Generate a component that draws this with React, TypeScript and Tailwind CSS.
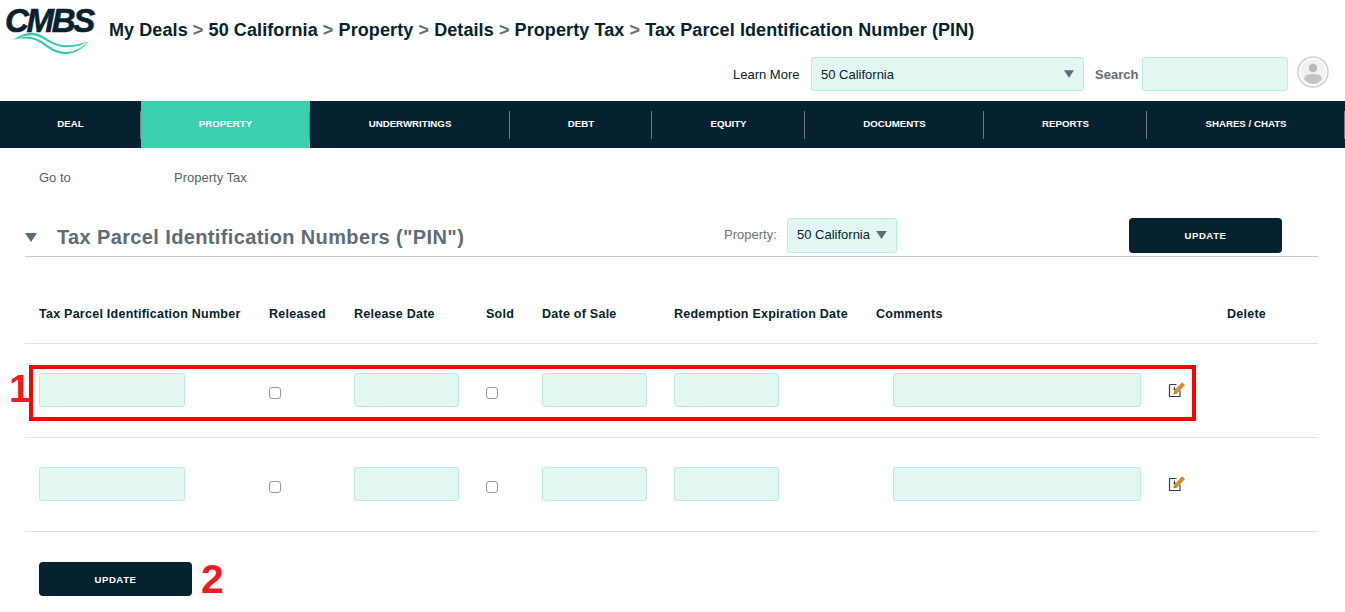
import React from 'react';

const font = { fontFamily: '"Liberation Sans", Arial, sans-serif' };

const navItems = [
  { label: 'DEAL', width: 'w-[141px]' },
  { label: 'PROPERTY', width: 'w-[169px]', active: true, divider: true },
  { label: 'UNDERWRITINGS', width: 'w-[200px]', divider: true },
  { label: 'DEBT', width: 'w-[142px]', divider: true },
  { label: 'EQUITY', width: 'w-[153px]', divider: true },
  { label: 'DOCUMENTS', width: 'w-[179px]', divider: true },
  { label: 'REPORTS', width: 'w-[163px]', divider: true },
  { label: 'SHARES / CHATS', width: 'w-[198px]', divider: true, last: true },
];

const crumbs = ['My Deals', '50 California', 'Property', 'Details', 'Property Tax', 'Tax Parcel Identification Number (PIN)'];

const headers = [
  'Tax Parcel Identification Number',
  'Released',
  'Release Date',
  'Sold',
  'Date of Sale',
  'Redemption Expiration Date',
  'Comments',
  'Delete',
];

function Logo() {
  return (
    <div className="relative w-[92px] h-[50px] shrink-0">
      <span className="absolute left-0 top-[-7px] text-[33px] leading-[38px] font-bold italic text-[#062231] tracking-[-2.3px] [-webkit-text-stroke:0.6px_#062231]">
        CMBS
      </span>
      <svg className="absolute left-0 top-0" width="92" height="50" viewBox="0 0 92 50" fill="none">
        <path d="M8 31 C16 25 24 23 30 24 C40 26 46 35 58 36 C67 37 76 35 84 32 C76 37 66 39 58 38 C46 37 38 28 30 26.5 C22 25.5 14 28 8 31Z" fill="#2fc9ab" />
        <path d="M8 31 C16 27 24 27 30 29 C40 32 46 42 60 43 C68 44 78 38 84 32 C78 40 68 46 58 45 C46 44 38 34 30 31 C22 29 14 29 8 31Z" fill="#2fc9ab" />
      </svg>
    </div>
  );
}

function Avatar() {
  return (
    <svg width="32" height="32" viewBox="0 0 32 32" fill="none">
      <circle cx="16" cy="16" r="15" fill="#fff" stroke="#cfcfcf" strokeWidth="1.5" />
      <circle cx="16" cy="16" r="12.5" fill="#f1f1f1" />
      <circle cx="16" cy="12" r="4.2" fill="#b9b9b9" />
      <path d="M7 23 C8 18.5 12 18 16 18 C20 18 24 18.5 25 23 C22.5 26.5 19.5 28 16 28 C12.5 28 9.5 26.5 7 23Z" fill="#c4c4c4" />
    </svg>
  );
}

function EditIcon() {
  return (
    <svg width="18" height="18" viewBox="0 0 18 18" fill="none" className="shrink-0">
      <path d="M1.5 3.5 H8.5 M1.5 3.5 V15.5 H12 V9.5" stroke="#3d3d3d" strokeWidth="1.2" />
      <path d="M6.5 5 L7.5 9 L5.5 9Z" fill="#222" />
      <path d="M5.8 13 L6.5 10 L14.2 1.8 L16.5 4 L8.8 12.2Z" fill="#e08e22" stroke="#a5600f" strokeWidth="0.6" />
    </svg>
  );
}

function Triangle({ className }: { className: string }) {
  return (
    <svg viewBox="0 0 12 9" className={className}>
      <path d="M0 0 H12 L6 9Z" fill="currentColor" />
    </svg>
  );
}

function TextBox({ width }: { width: string }) {
  return <input type="text" className={`${width} h-[34px] bg-[#e2f7f1] border border-[#b8ecdd] rounded-[3px] block`} />;
}

function Check() {
  return (
    <input
      type="checkbox"
      className="appearance-none block w-3 h-3 mt-[5px] bg-white border border-[#9a9a9a] rounded-[3px]"
    />
  );
}

function UpdateButton({ height }: { height: string }) {
  return (
    <button className={`w-[153px] ${height} pt-[2px] bg-[#062231] rounded-[4px] text-white text-[9.5px] font-bold tracking-[0.6px]`}>
      UPDATE
    </button>
  );
}

function PinRow() {
  return (
    <div className="grid grid-cols-[230px_85px_132px_56px_132px_202px_1fr] items-center h-[94px] pl-[14px] pb-[1px] border-b border-[#e3e3e3]">
      <TextBox width="w-[146px]" />
      <Check />
      <TextBox width="w-[105px]" />
      <Check />
      <TextBox width="w-[105px]" />
      <TextBox width="w-[105px]" />
      <div className="flex items-center pl-[17px] gap-[27px]">
        <TextBox width="w-[248px]" />
        <EditIcon />
      </div>
    </div>
  );
}

export default function App() {
  return (
    <div style={font} className="relative w-[1345px] h-[612px] bg-white overflow-hidden text-[#062231]">
      <header className="h-[101px] pl-[5px] pr-4 pt-[9px]">
        <div className="flex">
          <Logo />
          <h1 className="ml-3 mt-[9px] text-[18px] leading-6 font-bold whitespace-nowrap tracking-[0.09px]">
            {crumbs.map((crumb, i) => (
              <span key={crumb}>
                {i > 0 && <span className="text-[#5f6b76]"> &gt; </span>}
                {crumb}
              </span>
            ))}
          </h1>
        </div>
        <div className="flex items-center mt-[-2px] h-[34px] pl-[728px]">
          <span className="text-[13px] w-[78px] pt-[1px]">Learn More</span>
          <div className="w-[273px] h-[34px] px-[9px] flex items-center justify-between bg-[#e2f7f1] border border-[#b8ecdd] rounded-[3px] text-[13px]">
            <span className="pt-[1px]">50 California</span>
            <Triangle className="w-[10px] h-2 text-[#5f6b76]" />
          </div>
          <span className="ml-[11px] w-[47px] text-[13px] font-bold text-[#5f6b76] pt-[1px]">Search</span>
          <TextBox width="w-[146px]" />
          <div className="ml-[9px] mt-[-4px]">
            <Avatar />
          </div>
        </div>
      </header>

      <nav className="flex h-[47px] bg-[#062231]">
        {navItems.map((item) => (
          <div
            key={item.label}
            className={`relative ${item.width} flex items-center justify-center text-[9.7px] font-bold text-white ${
              item.active ? 'bg-[#3ad0ae]' : ''
            }`}
          >
            {item.divider && <span className="absolute left-[-1px] top-[10px] h-[28px] w-px bg-[#6c7d87]" />}
            {item.last && <span className="absolute right-0 top-[10px] h-[28px] w-px bg-[#6c7d87]" />}
            {item.label}
          </div>
        ))}
      </nav>

      <div className="flex h-[58px] items-center pl-[39px] pt-[1px] text-[13px] text-[#555f68]">
        <span className="w-[135px]">Go to</span>
        <span>Property Tax</span>
      </div>

      <main className="pl-[25px] pr-[27px]">
        <div className="flex items-center h-[51px] pt-[12px] border-b border-[#c9c9c9]">
          <Triangle className="w-3 h-[9px] text-[#5f6b76]" />
          <h2 className="ml-5 text-[20px] font-bold text-[#5f6b76] w-[667px] tracking-[0.37px]">Tax Parcel Identification Numbers ("PIN")</h2>
          <span className="text-[13px] text-[#6a7178] w-[63px] -mt-[4px]">Property:</span>
          <div className="w-[110px] h-[35px] -mt-[4px] px-[9px] flex items-center justify-between bg-[#e2f7f1] border border-[#b8ecdd] rounded-[3px] text-[13px]">
            50 California
            <Triangle className="w-[11px] h-2 text-[#5f6b76]" />
          </div>
          <div className="ml-[232px] -mt-[4px]">
            <UpdateButton height="h-[35px]" />
          </div>
        </div>

        <div className="grid grid-cols-[230px_85px_132px_56px_132px_202px_351px_1fr] items-center h-[87px] pl-[14px] pt-[29px] border-b border-[#e3e3e3] text-[12.5px] font-bold tracking-[0.25px]">
          {headers.map((h) => (
            <span key={h} className="whitespace-nowrap">
              {h}
            </span>
          ))}
        </div>

        <PinRow />
        <PinRow />

        <div className="pl-[14px] pt-[30px] flex items-center">
          <UpdateButton height="h-[34px]" />
          <span className="ml-[9px] text-[41px] leading-[34px] font-bold text-[#ed1c24]">2</span>
        </div>
      </main>

      {/* annotation overlay */}
      <div className="absolute left-[29px] top-[365px] w-[1167px] h-[56px] border-[4px] border-[#ff0000]" />
      <span className="absolute left-[9px] top-[369px] text-[39px] leading-none font-bold text-[#ed1c24]">1</span>
    </div>
  );
}
